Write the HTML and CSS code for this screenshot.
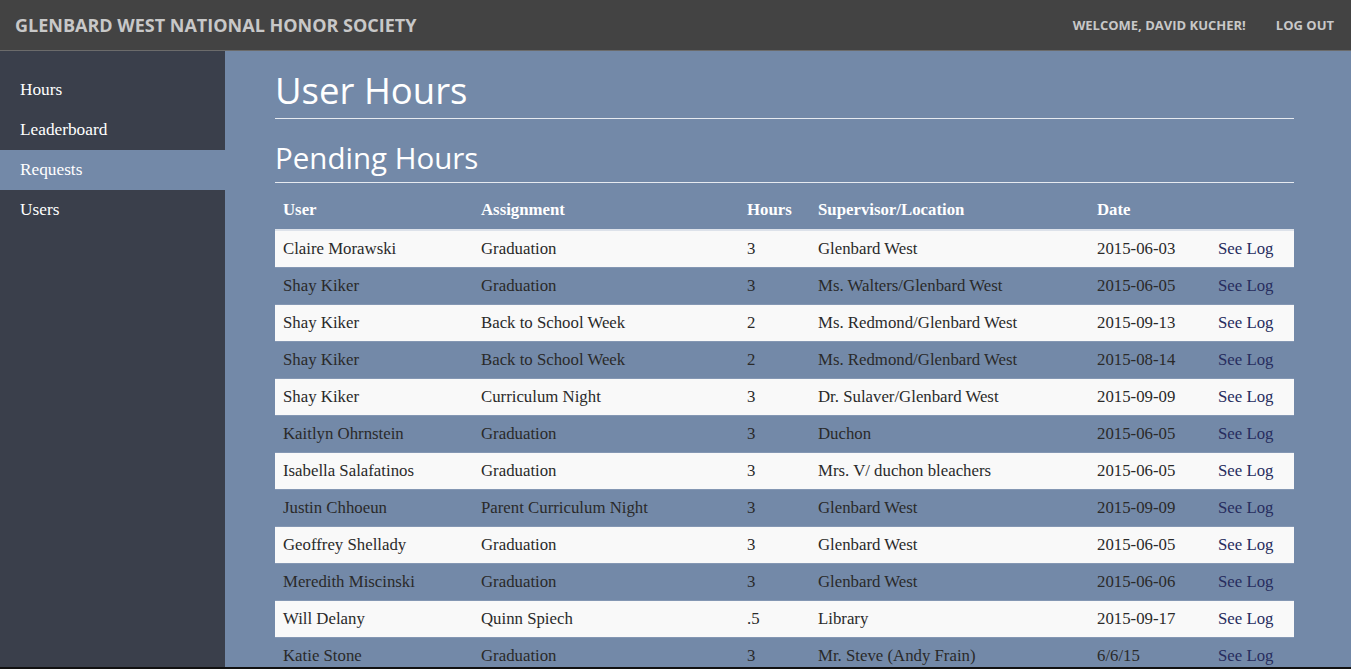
FILE: index.html
```html
<!DOCTYPE html>
<html>
<head>
<meta charset="utf-8">
<link rel="stylesheet" href="styles.css">
</head>
<body>
<header class="topbar">
  <div class="brand">Glenbard West National Honor Society</div>
  <nav class="usernav">
    <span class="welcome">Welcome, David Kucher!</span>
    <a class="logout" href="#">Log Out</a>
  </nav>
</header>
<div class="layout">
  <aside class="sidebar">
    <a class="side-item" href="#">Hours</a>
    <a class="side-item" href="#">Leaderboard</a>
    <a class="side-item active" href="#">Requests</a>
    <a class="side-item" href="#">Users</a>
  </aside>
  <main class="content">
    <h1 class="page-title">User Hours</h1>
    <h2 class="section-title">Pending Hours</h2>
    <table class="hours-table">
      <colgroup>
        <col class="c-user"><col class="c-assign"><col class="c-hours"><col class="c-sup"><col class="c-date"><col class="c-log">
      </colgroup>
      <thead>
        <tr><th>User</th><th>Assignment</th><th>Hours</th><th>Supervisor/Location</th><th>Date</th><th></th></tr>
      </thead>
      <tbody>
        <tr><td>Claire Morawski</td><td>Graduation</td><td>3</td><td>Glenbard West</td><td>2015-06-03</td><td><a href="#">See Log</a></td></tr>
        <tr><td>Shay Kiker</td><td>Graduation</td><td>3</td><td>Ms. Walters/Glenbard West</td><td>2015-06-05</td><td><a href="#">See Log</a></td></tr>
        <tr><td>Shay Kiker</td><td>Back to School Week</td><td>2</td><td>Ms. Redmond/Glenbard West</td><td>2015-09-13</td><td><a href="#">See Log</a></td></tr>
        <tr><td>Shay Kiker</td><td>Back to School Week</td><td>2</td><td>Ms. Redmond/Glenbard West</td><td>2015-08-14</td><td><a href="#">See Log</a></td></tr>
        <tr><td>Shay Kiker</td><td>Curriculum Night</td><td>3</td><td>Dr. Sulaver/Glenbard West</td><td>2015-09-09</td><td><a href="#">See Log</a></td></tr>
        <tr><td>Kaitlyn Ohrnstein</td><td>Graduation</td><td>3</td><td>Duchon</td><td>2015-06-05</td><td><a href="#">See Log</a></td></tr>
        <tr><td>Isabella Salafatinos</td><td>Graduation</td><td>3</td><td>Mrs. V/ duchon bleachers</td><td>2015-06-05</td><td><a href="#">See Log</a></td></tr>
        <tr><td>Justin Chhoeun</td><td>Parent Curriculum Night</td><td>3</td><td>Glenbard West</td><td>2015-09-09</td><td><a href="#">See Log</a></td></tr>
        <tr><td>Geoffrey Shellady</td><td>Graduation</td><td>3</td><td>Glenbard West</td><td>2015-06-05</td><td><a href="#">See Log</a></td></tr>
        <tr><td>Meredith Miscinski</td><td>Graduation</td><td>3</td><td>Glenbard West</td><td>2015-06-06</td><td><a href="#">See Log</a></td></tr>
        <tr><td>Will Delany</td><td>Quinn Spiech</td><td>.5</td><td>Library</td><td>2015-09-17</td><td><a href="#">See Log</a></td></tr>
        <tr><td>Katie Stone</td><td>Graduation</td><td>3</td><td>Mr. Steve (Andy Frain)</td><td>6/6/15</td><td><a href="#">See Log</a></td></tr>
      </tbody>
    </table>
  </main>
</div>
</body>
</html>
```
FILE: styles.css
```css
* { box-sizing: border-box; }
html, body { margin: 0; padding: 0; height: 100%; overflow: hidden; }
body {
  font-family: "Liberation Serif", "DejaVu Serif", serif;
  background: #111;
  color: #2a2a2a;
}
.topbar {
  height: 51px;
  background: #434343;
  border-bottom: 1px solid #6b6b6b;
  display: flex;
  align-items: center;
  justify-content: space-between;
  padding: 0 17px 0 15px;
  font-family: "Open Sans", sans-serif;
  font-weight: 700;
  text-transform: uppercase;
  color: #c8c8c8;
}
.brand { font-size: 18px; }
.usernav { display: flex; gap: 30px; font-size: 13px; }
.usernav a { color: #c8c8c8; text-decoration: none; }
.layout {
  display: flex;
  height: calc(100% - 53px);
  overflow: hidden;
  background: #7389a8;
}
.sidebar {
  width: 225px;
  flex: none;
  background: #3a3f4b;
  padding-top: 19px;
  display: flex;
  flex-direction: column;
}
.side-item {
  display: block;
  height: 40px;
  line-height: 40px;
  padding-left: 20px;
  color: #fff;
  text-decoration: none;
  font-size: 17.3px;
}
.side-item.active { background: #7389a8; }
.content {
  flex: 1;
  padding: 0 57px 0 50px;
}
.page-title {
  margin: 17px 0 0;
  font-family: "Open Sans", sans-serif;
  font-weight: 400;
  font-size: 36.5px;
  line-height: 44px;
  color: #fff;
  padding-bottom: 6px;
  border-bottom: 1px solid #e6eaf0;
}
.section-title {
  margin: 21px 0 0;
  font-family: "Open Sans", sans-serif;
  font-weight: 400;
  font-size: 29.5px;
  line-height: 36px;
  color: #fff;
  padding-bottom: 6px;
  border-bottom: 1px solid #e6eaf0;
}
.hours-table {
  width: 100%;
  border-collapse: collapse;
  table-layout: fixed;
  margin-top: 7px;
  font-size: 16.8px;
}
.c-user { width: 198px; }
.c-assign { width: 266px; }
.c-hours { width: 71px; }
.c-sup { width: 279px; }
.c-date { width: 121px; }
.c-log { width: 84px; }
.hours-table th {
  text-align: left;
  color: #fff;
  font-weight: 700;
  height: 40px;
  padding: 0 8px;
  border-bottom: 2px solid #dde2ea;
}
.hours-table td {
  height: 37px;
  padding: 0 8px;
  white-space: nowrap;
  border-top: 1px solid #8497b3;
}
.hours-table tbody tr:nth-child(odd) { background: #f9f9f9; }
.hours-table tbody tr:first-child td { border-top: none; }
.hours-table a { color: #272d5e; text-decoration: none; }
```
